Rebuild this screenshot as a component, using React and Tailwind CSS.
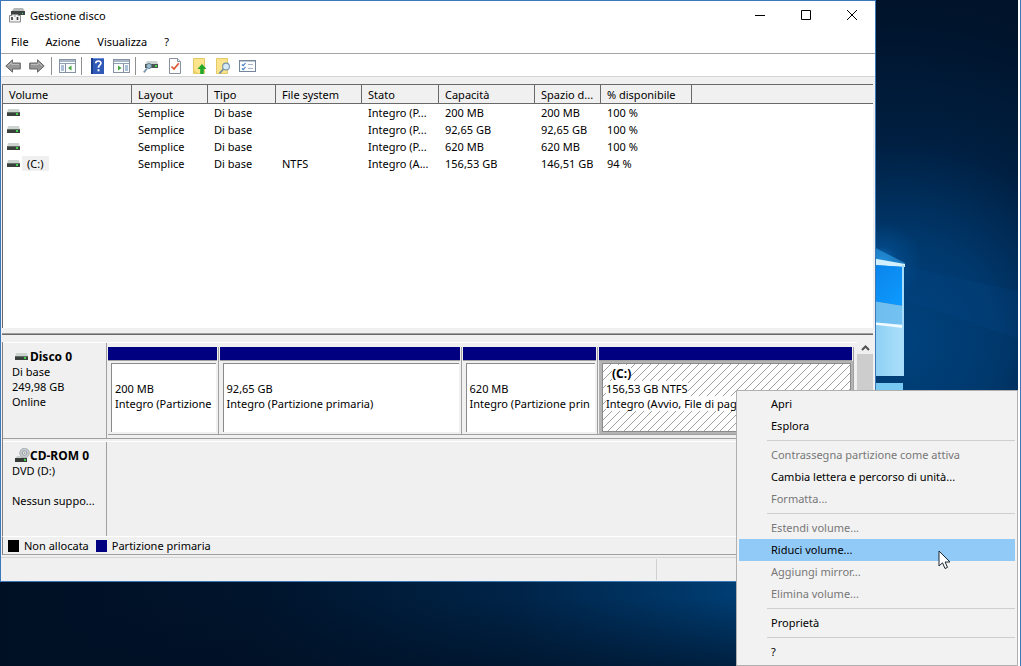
import { useState } from "react";

const columns = [
  { name: "Volume", width: "w-[129px]" },
  { name: "Layout", width: "w-[76px]" },
  { name: "Tipo", width: "w-[68px]" },
  { name: "File system", width: "w-[86px]" },
  { name: "Stato", width: "w-[77px]" },
  { name: "Capacità", width: "w-[96px]" },
  { name: "Spazio d...", width: "w-[66px]" },
  { name: "% disponibile", width: "w-[91px]" },
];

const volumes = [
  { id: 1, label: "", cells: ["Semplice", "Di base", "", "Integro (P...", "200 MB", "200 MB", "100 %"] },
  { id: 2, label: "", cells: ["Semplice", "Di base", "", "Integro (P...", "92,65 GB", "92,65 GB", "100 %"] },
  { id: 3, label: "", cells: ["Semplice", "Di base", "", "Integro (P...", "620 MB", "620 MB", "100 %"] },
  { id: 4, label: "(C:)", cells: ["Semplice", "Di base", "NTFS", "Integro (A...", "156,53 GB", "146,51 GB", "94 %"] },
];

const partitions = [
  { id: 1, size: "200 MB", status: "Integro (Partizione" },
  { id: 2, size: "92,65 GB", status: "Integro (Partizione primaria)" },
  { id: 3, size: "620 MB", status: "Integro (Partizione prin" },
  { id: 4, label: "(C:)", size: "156,53 GB NTFS", status: "Integro (Avvio, File di pag" },
];

const menuGroups = [
  [{ label: "Apri" }, { label: "Esplora" }],
  [
    { label: "Contrassegna partizione come attiva", disabled: true },
    { label: "Cambia lettera e percorso di unità..." },
    { label: "Formatta...", disabled: true },
  ],
  [
    { label: "Estendi volume...", disabled: true },
    { label: "Riduci volume..." },
    { label: "Aggiungi mirror...", disabled: true },
    { label: "Elimina volume...", disabled: true },
  ],
  [{ label: "Proprietà" }],
  [{ label: "?" }],
];

const Wallpaper = () => (
  <svg className="absolute inset-0 h-full w-full" viewBox="0 0 1021 666" preserveAspectRatio="xMaxYMax slice" aria-hidden="true">
    <defs>
      <radialGradient id="glow" gradientUnits="userSpaceOnUse" cx="900" cy="340" r="400">
        <stop offset="0" stopColor="#00427e" />
        <stop offset="0.25" stopColor="#00386c" />
        <stop offset="0.5" stopColor="#001f41" />
        <stop offset="0.8" stopColor="#00142c" />
        <stop offset="1" stopColor="#001126" />
      </radialGradient>
      <radialGradient id="flare" gradientUnits="userSpaceOnUse" cx="882" cy="262" r="40">
        <stop offset="0" stopColor="#1c8fe8" stopOpacity="0.75" />
        <stop offset="0.4" stopColor="#0a6cc0" stopOpacity="0.25" />
        <stop offset="1" stopColor="#0a6cc0" stopOpacity="0" />
      </radialGradient>
      <linearGradient id="low" x1="0" y1="0" x2="1" y2="0">
        <stop offset="0" stopColor="#001024" />
        <stop offset="0.35" stopColor="#00142c" />
        <stop offset="0.7" stopColor="#002448" />
        <stop offset="1" stopColor="#003e74" />
      </linearGradient>
      <linearGradient id="fade" x1="0" y1="0" x2="0" y2="1">
        <stop offset="0.2" stopColor="#001024" stopOpacity="0" />
        <stop offset="1" stopColor="#001024" stopOpacity="0.65" />
      </linearGradient>
      <linearGradient id="pane" x1="0" y1="0" x2="1" y2="1">
        <stop offset="0" stopColor="#0a7fe6" />
        <stop offset="1" stopColor="#0d9bff" />
      </linearGradient>
      <linearGradient id="paleGlass" x1="0" y1="0" x2="1" y2="0">
        <stop offset="0" stopColor="#7fc8f0" />
        <stop offset="1" stopColor="#abdffa" />
      </linearGradient>
    </defs>
    <rect width="1021" height="666" fill="url(#glow)" />
    <rect y="580" width="740" height="86" fill="url(#low)" />
    <rect y="580" width="740" height="86" fill="url(#fade)" />
    <rect x="826" y="200" width="120" height="130" fill="url(#flare)" />
    <path d="M905 266L1021 292V340L905 300Z" fill="#0a56a0" opacity="0.12" />
    <path d="M860 240L905 263L904 268L860 266Z" fill="#2f9fe8" opacity="0.6" />
    <path d="M860 256L905 264V267L860 264Z" fill="#d2efff" />
    <path d="M860 264L903 267V306L860 299Z" fill="url(#pane)" />
    <path d="M860 299L903 306V376H860Z" fill="url(#paleGlass)" />
    <path d="M860 299L903 306V325L860 321Z" fill="#62b7ee" opacity="0.75" />
    <path d="M860 321L903 325V328L860 323Z" fill="#f0faff" />
    <path d="M902 265H904V376H902Z" fill="#a5dcfb" />
    <path d="M860 383H903V420H860Z" fill="#78c9f2" />
  </svg>
);

const DriveIcon = () => (
  <svg className="shrink-0" width="13" height="8" viewBox="0 0 13 8" aria-hidden="true">
    <path d="M1 0H12L13 4H0Z" fill="#cdd3cf" />
    <rect y="3" width="13" height="4" fill="#3a403c" />
    <rect y="3" width="13" height="1" fill="#656d68" />
    <rect x="9" y="4" width="2" height="2" fill="#3fd04c" />
  </svg>
);

const CdIcon = () => (
  <svg className="shrink-0" width="15" height="15" viewBox="0 0 15 15" aria-hidden="true">
    <path d="M2 8H11L12 11H0Z" fill="#c9cfcb" />
    <rect y="10" width="12" height="4" fill="#363b38" />
    <rect x="9" y="11" width="2" height="2" fill="#3fd04c" />
    <circle cx="9.5" cy="5" r="4.8" fill="#c6cbcf" stroke="#9aa0a4" strokeWidth="0.7" />
    <circle cx="9.5" cy="5" r="2.3" fill="#e6e8e9" stroke="#8b9196" strokeWidth="0.8" />
    <circle cx="9.5" cy="5" r="0.8" fill="#80868a" />
  </svg>
);

const AppIcon = () => (
  <svg width="16" height="15" viewBox="0 0 16 15" aria-hidden="true">
    <path d="M5 0H14L16 4H2Z" fill="#b4b9b7" />
    <rect x="2" y="3" width="14" height="4" fill="#3d4240" />
    <rect x="13" y="5" width="1" height="1" fill="#46e052" />
    <path d="M0.500 7.500H3V6.500H9V7.500H11.500V14H0.500Z" fill="#f2f2f2" stroke="#8a8a8a" strokeWidth="1" />
    <path d="M3 9V12M8.500 9V12" stroke="#333" strokeWidth="1.600" />
    <path d="M5 8H7" stroke="#999" />
  </svg>
);

const ArrowIcon = ({ flip }) => (
  <svg width="16" height="14" viewBox="0 0 16 14" className={flip ? "-scale-x-100" : ""} aria-hidden="true">
    <path d="M0.800 7L7.500 0.800V4H15.300V10H7.500V13.200Z" fill="#969696" stroke="#676767" strokeWidth="1" strokeLinejoin="round" />
    <path d="M3 6.800L6.800 3.300V5.500H14" fill="none" stroke="#bcbcbc" strokeWidth="1" />
  </svg>
);

const PanelIcon = ({ right }) => (
  <svg width="17" height="14" viewBox="0 0 17 14" aria-hidden="true">
    <rect x="0.500" y="0.500" width="16" height="13" fill="#fafbfc" stroke="#8793a2" />
    <path d="M1 4.500H16" stroke="#8fa0b4" />
    <rect x="1" y="1" width="15" height="2" fill="#a9b6c6" />
    <path d={right ? "M10.500 5V13" : "M6.500 5V13"} stroke="#8793a2" />
    <path d={right ? "M12 7H15M12 9H15M12 11H15" : "M2 7H5M2 9H5M2 11H5"} stroke="#5d86b5" />
    <path d={right ? "M5 6.500V11.500L8.500 9Z" : "M12.500 6.500V11.500L9 9Z"} fill="#43a63b" />
  </svg>
);

const HelpIcon = () => (
  <svg width="13" height="16" viewBox="0 0 13 16" aria-hidden="true">
    <rect width="13" height="16" fill="#3159b8" />
    <rect width="2" height="16" fill="#1d3d8e" />
    <rect x="2" width="11" height="1" fill="#6e8fdb" />
    <path d="M4.700 5.300C4.900 2.200 10 2.300 9.900 5.200C9.800 7.300 7.400 7.200 7.400 9.700" fill="none" stroke="#fff" strokeWidth="1.700" />
    <rect x="6.500" y="11.300" width="2" height="2" fill="#fff" />
  </svg>
);

const DriveSearchIcon = () => (
  <svg width="16" height="14" viewBox="0 0 16 14" aria-hidden="true">
    <path d="M4 2H14L15 5H2Z" fill="#cdd3d1" />
    <rect x="2" y="5" width="13" height="4" fill="#4a5451" />
    <rect x="12" y="6" width="2" height="2" fill="#50d35a" />
    <circle cx="6" cy="7" r="2.500" fill="#9fc0d4" stroke="#5f7e90" strokeWidth="1" />
    <path d="M4 9.500L0.800 13.300" stroke="#7898ae" strokeWidth="1.800" />
  </svg>
);

const CheckPageIcon = () => (
  <svg width="12" height="16" viewBox="0 0 12 16" aria-hidden="true">
    <path d="M0.500 0.500H8.500L11.500 3.500V15.500H0.500Z" fill="#fdfdfd" stroke="#8790a0" />
    <path d="M8.500 0.500V3.500H11.500" fill="#e4e7ec" stroke="#8790a0" />
    <path d="M2.500 8.500L5 11L9.800 5.300" fill="none" stroke="#dd5632" strokeWidth="1.700" />
  </svg>
);

const FolderUpIcon = () => (
  <svg width="15" height="16" viewBox="0 0 15 16" aria-hidden="true">
    <path d="M1.500 0.500H12.500V15.500H1.500Z" fill="#fbe48c" stroke="#e5c867" />
    <path d="M1.500 11L6 15.500H1.500Z" fill="#efcf66" />
    <path d="M10 6L14.500 11H11.800V16H8.200V11H5.500Z" fill="#20a82a" />
  </svg>
);

const FolderSearchIcon = () => (
  <svg width="15" height="16" viewBox="0 0 15 16" aria-hidden="true">
    <path d="M0.500 0.500H11.500V15.500H0.500Z" fill="#fbe48c" stroke="#e5c867" />
    <circle cx="10" cy="8.500" r="3.400" fill="#d5eaf6" stroke="#7595a9" strokeWidth="1.100" />
    <path d="M7.500 11L3.500 15.300" stroke="#6d8fa8" strokeWidth="1.700" />
  </svg>
);

const ListIcon = () => (
  <svg width="17" height="12" viewBox="0 0 17 12" aria-hidden="true">
    <rect x="0.500" y="0.500" width="16" height="11" fill="#fbfcfd" stroke="#75869a" />
    <rect x="1" y="1" width="15" height="1" fill="#c0cad6" />
    <path d="M3 4.500L4.200 5.700L6.500 3M3 8.500L4.200 9.700L6.500 7" fill="none" stroke="#3f78c2" strokeWidth="1.100" />
    <path d="M9 4.500H14M9 8.500H14" stroke="#a8b4c2" />
  </svg>
);

const ToolButton = ({ label, children }) => (
  <button type="button" aria-label={label} className="flex w-6 items-center justify-center">
    {children}
  </button>
);

const ToolDivider = () => <span className="ml-[2px] mr-[3px] h-[18px] w-px self-center bg-[#8f8f8f]" />;

const TitleBar = () => (
  <header className="flex h-[29px] items-center bg-white pl-2">
    <AppIcon />
    <h1 className="ml-[5px] flex-1">Gestione disco</h1>
    <button type="button" aria-label="Riduci a icona" className="flex h-full w-[46px] items-center justify-center">
      <svg width="11" height="11" viewBox="0 0 11 11"><path d="M0 5.500H10" stroke="#000" /></svg>
    </button>
    <button type="button" aria-label="Ingrandisci" className="flex h-full w-[46px] items-center justify-center">
      <svg width="11" height="11" viewBox="0 0 11 11"><path d="M0.500 0.500H9.500V9.500H0.500Z" fill="none" stroke="#000" /></svg>
    </button>
    <button type="button" aria-label="Chiudi" className="flex h-full w-[46px] items-center justify-center">
      <svg width="11" height="11" viewBox="0 0 11 11"><path d="M0 0L10 10M10 0L0 10" stroke="#000" /></svg>
    </button>
  </header>
);

const MenuBar = () => (
  <nav className="flex h-6 items-center gap-[17px] border-b border-[#a5a5a5] bg-white pl-[10px]">
    {["File", "Azione", "Visualizza", "?"].map((item) => (
      <button key={item} type="button">{item}</button>
    ))}
  </nav>
);

const Toolbar = () => (
  <div className="flex h-[23px] border-b border-[#d5d5d5] bg-white pt-px">
    <ToolButton label="Indietro"><ArrowIcon /></ToolButton>
    <ToolButton label="Avanti"><ArrowIcon flip /></ToolButton>
    <ToolDivider />
    <ToolButton label="Mostra albero"><PanelIcon /></ToolButton>
    <ToolDivider />
    <ToolButton label="Guida"><HelpIcon /></ToolButton>
    <ToolButton label="Mostra riquadro azioni"><PanelIcon right /></ToolButton>
    <ToolDivider />
    <ToolButton label="Analizza dischi"><DriveSearchIcon /></ToolButton>
    <ToolButton label="Verifica"><CheckPageIcon /></ToolButton>
    <ToolButton label="Apri cartella"><FolderUpIcon /></ToolButton>
    <ToolButton label="Esplora cartella"><FolderSearchIcon /></ToolButton>
    <ToolButton label="Impostazioni"><ListIcon /></ToolButton>
  </div>
);

const VolumeList = () => (
  <section className="flex-1 border-l border-t border-[#696969] bg-white">
    <table className="w-full table-fixed border-separate border-spacing-0">
      <thead>
        <tr className="h-[19px] bg-[#f0f0f0]">
          {columns.map((column) => (
            <th
              key={column.name}
              className={`${column.width} whitespace-nowrap border-b border-r border-[#696969] p-0 pl-[6px] text-left font-normal`}
            >
              {column.name}
            </th>
          ))}
          <th className="border-b border-[#696969] p-0" aria-label="Altro" />
        </tr>
      </thead>
      <tbody>
        {volumes.map((volume) => (
          <tr key={volume.id} className="h-[17px]">
            <td className="p-0 pl-1">
              <div className="flex items-center gap-[2px]">
                <DriveIcon />
                {volume.label && <span className="bg-[#f0f0f0] px-[5px]">{volume.label}</span>}
              </div>
            </td>
            {volume.cells.map((cell, index) => (
              <td key={index} className="whitespace-nowrap p-0 pl-[6px]">{cell}</td>
            ))}
            <td className="p-0" />
          </tr>
        ))}
      </tbody>
    </table>
  </section>
);

const Partition = ({ partition }) => {
  const selected = Boolean(partition.label);
  return (
    <div className="flex min-w-0 flex-col border-r border-[#a0a0a0]">
      <div className="mr-px h-[14px] border-b border-[#a0a0a0] bg-[#000080]" />
      <div className={`flex-1 p-[2px] pl-[3px] ${selected ? "bg-[#b4b4b4]" : ""}`}>
        <div
          className={`h-full overflow-hidden whitespace-nowrap border-l border-t border-[#8a8a8a] px-[3px] pt-[2px] ${
            selected
              ? "border-b border-r bg-white bg-[linear-gradient(135deg,transparent_46%,#a0a0a0_46%,#a0a0a0_54%,transparent_54%)] bg-[length:8px_8px]"
              : "bg-white"
          }`}
        >
          <p className="h-[15px] pl-[6px] text-[12px] font-bold">
            {selected && <span className="bg-white">{partition.label}</span>}
          </p>
          <p className="h-[15px]"><span className="bg-white">{partition.size}</span></p>
          <p className="h-[15px]"><span className="bg-white">{partition.status}</span></p>
        </div>
      </div>
    </div>
  );
};

const DiskPane = () => (
  <section className="flex border-l border-[#808080]">
    <div className="min-w-0 flex-1">
      <div className="flex h-[97px] border-t border-white">
        <div className="w-[104px] shrink-0 border-b border-r border-[#a0a0a0] pl-[9px] pt-[6px]">
          <h2 className="flex items-center gap-[2px] pl-[3px] text-[12px] font-bold"><DriveIcon />Disco 0</h2>
          <p>Di base</p>
          <p>249,98 GB</p>
          <p>Online</p>
        </div>
        <div className="min-w-0 flex-1 border-b border-[#a0a0a0] pb-[3px] pl-px pr-[3px] pt-1">
          <div className="grid h-full grid-cols-[111fr_243fr_136fr_256fr] gap-x-px border-b border-[#a0a0a0]">
            {partitions.map((partition) => (
              <Partition key={partition.id} partition={partition} />
            ))}
          </div>
        </div>
      </div>
      <div className="mt-[2px] h-[95px] border-t border-white">
        <div className="h-full w-[104px] border-r border-[#a0a0a0] pl-[9px] pt-[6px]">
          <h2 className="flex h-[15px] items-end pl-[3px] text-[12px] font-bold"><CdIcon />CD-ROM 0</h2>
          <p>DVD (D:)</p>
          <p className="mt-[15px] whitespace-nowrap">Nessun suppo...</p>
        </div>
      </div>
    </div>
    <div className="flex w-4 flex-col bg-[#f0f0f0]">
      <button type="button" aria-label="Scorri in alto" className="flex h-3 items-center justify-center">
        <svg width="9" height="6" viewBox="0 0 9 6"><path d="M1 5L4.500 1.500L8 5" fill="none" stroke="#505050" strokeWidth="2" /></svg>
      </button>
      <div className="h-24 bg-[#cdcdcd]" />
    </div>
  </section>
);

const Legend = () => (
  <div className="flex h-[19px] items-center border-b border-l border-t border-b-[#a0a0a0] border-l-[#808080] border-t-white pl-[5px]">
    <span className="h-3 w-[11px] bg-black" />
    <span className="ml-[5px]">Non allocata</span>
    <span className="ml-[7px] h-3 w-[11px] bg-[#000080]" />
    <span className="ml-[5px]">Partizione primaria</span>
  </div>
);

const ContextMenu = ({ active, onHover }) => (
  <div className="absolute bottom-0 right-[3px] w-[282px] border border-[#b0b0b0] bg-[#f2f2f2] px-[2px] py-[2px]" role="menu">
    {menuGroups.map((group, index) => (
      <div key={index}>
        {index > 0 && <hr className="my-[3px] ml-7 border-[#cfcfcf]" />}
        {group.map((item) => (
          <button
            key={item.label}
            type="button"
            role="menuitem"
            disabled={item.disabled}
            onMouseEnter={() => onHover(item.label)}
            className={`block h-[22px] w-full pb-[2px] pl-8 text-left ${item.disabled ? "text-[#777]" : "text-black"} ${
              active === item.label ? "bg-[#91c9f7]" : ""
            }`}
          >
            {item.label}
          </button>
        ))}
      </div>
    ))}
    <svg className="pointer-events-none absolute right-[66px] top-[159px]" width="13" height="20" viewBox="0 0 13 20" aria-hidden="true">
      <path d="M1 1V16L4.500 12.800L7 18.500L9.500 17.400L7.100 12H12Z" fill="#fff" stroke="#1b2733" strokeWidth="1" />
    </svg>
  </div>
);

const App = () => {
  const [active, setActive] = useState("Riduci volume...");

  return (
    <div className="relative flex min-h-screen flex-col overflow-hidden bg-[#001126] pb-[84px] pr-[145px] font-['Noto_Sans','Open_Sans',sans-serif] text-[11px] leading-[15px] text-black">
      <Wallpaper />
      <main className="relative flex flex-1 flex-col border border-[#3a78b8] bg-[#f0f0f0]">
        <TitleBar />
        <MenuBar />
        <Toolbar />
        <div className="flex flex-1 flex-col pl-px pr-[2px] pt-[7px]">
          <VolumeList />
          <div className="mb-[7px] mt-[5px] h-[2px] border-b border-t border-b-[#696969] border-t-[#a0a0a0]" />
          <DiskPane />
          <Legend />
        </div>
        <footer className="mt-[2px] flex h-6 border-t border-[#d5d5d5] pb-px pt-px">
          <div className="flex-[3] border-r border-[#d0d0d0]" />
          <div className="flex-1" />
        </footer>
      </main>
      <div className="absolute inset-y-0 right-0 w-[3px] border-r border-[#3a78b8] bg-white" />
      <ContextMenu active={active} onHover={setActive} />
    </div>
  );
};

export default App;
